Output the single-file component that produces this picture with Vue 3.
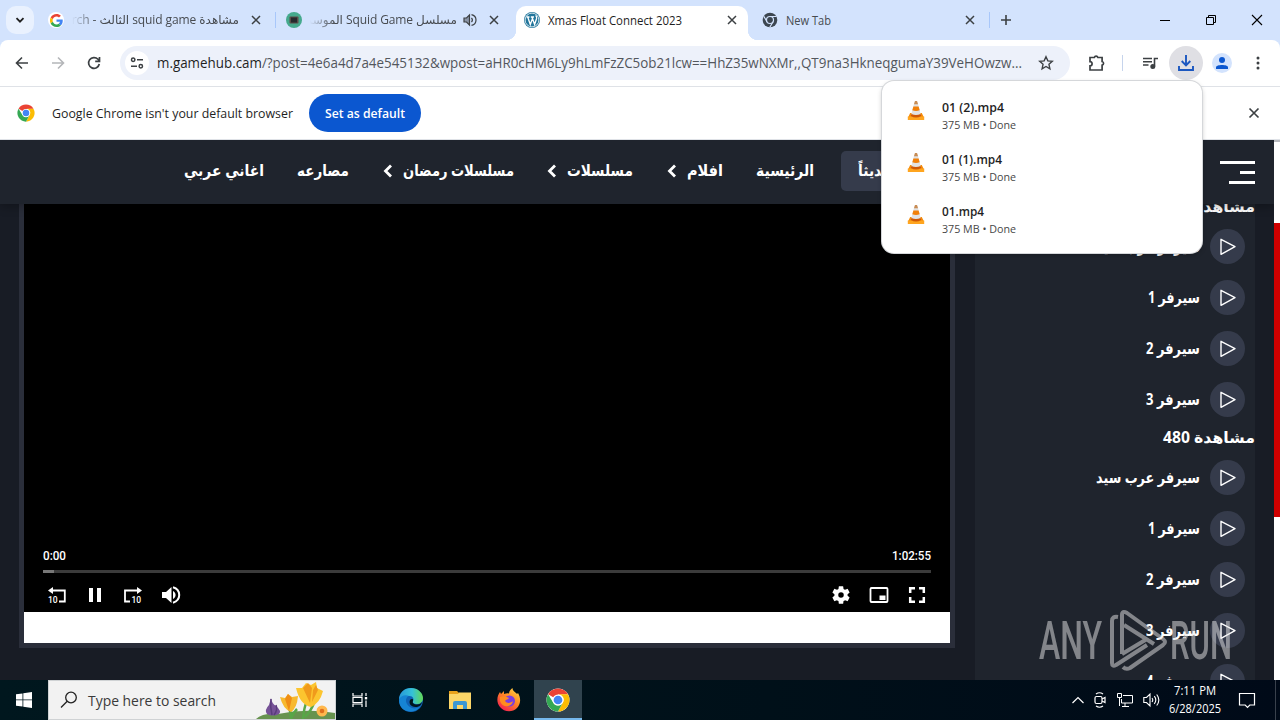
<script setup>
import { h } from 'vue';

// single line of text squeezed to a known width
const FitText = (props) => h('svg', { class: 'fit-text', width: props.w, height: 20 }, [
  h('text', {
    x: props.w / 2,
    y: 15,
    'text-anchor': 'middle',
    textLength: props.w,
    lengthAdjust: 'spacingAndGlyphs',
    fill: 'currentColor'
  }, props.text)
]);
FitText.props = ['w', 'text'];

const downloads = [
  { name: '01 (2).mp4', w: 62 },
  { name: '01 (1).mp4', w: 60 },
  { name: '01.mp4', w: 42 }
];

const menu = [
  { label: 'الرئيسية', w: 58 },
  { label: 'افلام', w: 36, arrow: true },
  { label: 'مسلسلات', w: 66, arrow: true },
  { label: 'مسلسلات رمضان', w: 111, arrow: true },
  { label: 'مصارعه', w: 52 },
  { label: 'اغاني عربي', w: 80 }
];

const groups = [
  {
    title: 'مشاهدة 720',
    servers: [
      { label: 'سيرفر عرب سيد', w: 104 },
      { label: 'سيرفر 1', w: 52 },
      { label: 'سيرفر 2', w: 54 },
      { label: 'سيرفر 3', w: 54 }
    ]
  },
  {
    title: 'مشاهدة 480',
    servers: [
      { label: 'سيرفر عرب سيد', w: 104 },
      { label: 'سيرفر 1', w: 52 },
      { label: 'سيرفر 2', w: 54 },
      { label: 'سيرفر 3', w: 54 },
      { label: 'سيرفر 4', w: 54 }
    ]
  }
];
</script>

<template>
  <div class="screen">
    <svg class="defs" width="0" height="0">
      <defs>
        <symbol id="chrome" viewBox="0 0 48 48">
          <circle cx="24" cy="24" r="23" fill="#fff" />
          <path d="M24 24 4.1 12.5A23 23 0 0 1 43.9 12.5L24 13Z" fill="#ea4335" />
          <path d="M43.9 12.5A23 23 0 0 1 24 47L33.5 29.5A11 11 0 0 0 24 12.5Z" fill="#fbbc04" />
          <path d="M4.1 12.5A23 23 0 0 0 24 47L33.5 29.5A11 11 0 0 1 14.5 29.5Z" fill="#34a853" />
          <circle cx="24" cy="24" r="11" fill="#fff" />
          <circle cx="24" cy="24" r="8.7" fill="#4285f4" />
        </symbol>
        <symbol id="close" viewBox="0 0 16 16">
          <path d="M4 4l8 8M12 4l-8 8" fill="none" stroke="currentColor" stroke-width="1.5" />
        </symbol>
        <symbol id="cone" viewBox="0 0 18 21">
          <path d="M3.2 13h11.6l2.400 5H.8z" fill="#f58a07" />
          <path d="M.8 16.500h16.400v3.500H.8z" fill="#ffa51f" />
          <path d="M7.600 1.500h2.800L14 15.500q-5 2.600-10 0z" fill="#e2e2e2" />
          <path d="M8 1h2l1 3.300H7z" fill="#c98d55" />
          <path d="M6.400 6.500h5.200l1.100 3.800q-3.700 1.500-7.400 0z" fill="#f28008" />
          <path d="M4.400 14l-.6 2q5.200 3 10.400 0l-.6-2q-4.600 2.200-9.200 0z" fill="#cf5805" />
        </symbol>
      </defs>
    </svg>

    <div class="tab-strip">
      <div class="tab-search">
        <svg width="12" height="12" viewBox="0 0 12 12"><path d="M2.5 4.2 6 7.7l3.5-3.5" fill="none" stroke="#1f1f1f" stroke-width="1.8" /></svg>
      </div>
      <div class="tab tab-google">
        <span class="round-icon">
          <svg width="13" height="13" viewBox="0 0 48 48">
            <path fill="#ea4335" d="M24 9.5c3.5 0 6.700 1.200 9.200 3.600l6.900-6.900C35.900 2.400 30.500 0 24 0 14.600 0 6.500 5.400 2.600 13.200l8 6.200C12.400 13.700 17.700 9.500 24 9.500z" />
            <path fill="#4285f4" d="M47 24.500c0-1.600-.2-3.100-.4-4.500H24v9h12.900c-.6 3-2.200 5.500-4.700 7.200l7.700 6C44.400 38 47 31.800 47 24.500z" />
            <path fill="#fbbc05" d="M10.500 28.600a14.500 14.500 0 0 1 0-9.200l-8-6.200a24 24 0 0 0 0 21.600z" />
            <path fill="#34a853" d="M24 48c6.500 0 11.900-2.100 15.900-5.800l-7.700-6c-2.200 1.500-4.900 2.300-8.200 2.300-6.300 0-11.600-4.200-13.500-9.900l-8 6.200C6.500 42.600 14.600 48 24 48z" />
          </svg>
        </span>
        <span class="tab-title faded" dir="rtl">مشاهدة squid game الثالث - Google Search</span>
        <svg class="tab-close" width="16" height="16"><use href="#close" /></svg>
      </div>
      <i class="tab-line"></i>
      <div class="tab tab-series">
        <svg width="16" height="16" viewBox="0 0 16 16">
          <circle cx="8" cy="8" r="8" fill="#45a98d" />
          <rect x="3.500" y="4.500" width="9" height="7" rx="1" fill="#5b4b48" />
          <rect x="5" y="5.500" width="6" height="5" fill="#252a2d" />
        </svg>
        <span class="tab-title faded" dir="rtl">مسلسل Squid Game الموسم الثالث</span>
        <svg class="speaker" width="14" height="14" viewBox="0 0 14 14" fill="none" stroke="#3c4043" stroke-width="1.2">
          <path d="M1 5v4h2.500L6.500 12V2L3.500 5z" fill="#8a94a6" />
          <path d="M8.500 4.800q1.800 2.200 0 4.400M8.500 1.600c6 1.400 6 9.400 0 10.800" />
        </svg>
        <svg class="tab-close" width="16" height="16"><use href="#close" /></svg>
      </div>
      <div class="tab tab-active">
        <svg width="16" height="16" viewBox="0 0 16 16">
          <circle cx="8" cy="8" r="8" fill="#21759b" />
          <circle cx="8" cy="8" r="6.900" fill="none" stroke="#fff" stroke-width=".8" />
          <path d="M2.500 5h3M6.800 5h3.200M3.700 5l2.600 7.500L8.500 6.500M8 5l2.600 7.500L12.600 6.500q.4-2-1-3" fill="none" stroke="#fff" stroke-width="1.300" />
        </svg>
        <FitText class="tab-title" :w="134" text="Xmas Float Connect 2023" />
        <svg class="tab-close" width="16" height="16"><use href="#close" /></svg>
      </div>
      <div class="tab tab-new">
        <svg width="16" height="16" viewBox="0 0 16 16">
          <circle cx="8" cy="8" r="7.300" fill="#3c4650" />
          <circle cx="8" cy="8" r="3.500" fill="#3c4650" stroke="#d3e3fd" stroke-width="1.200" />
          <path d="M8 4.500h6.500M5 9.800 1.800 4.200M11 9.800 7.800 15.300" stroke="#d3e3fd" stroke-width="1.200" />
        </svg>
        <FitText class="tab-title" :w="45" text="New Tab" />
        <svg class="tab-close" width="16" height="16"><use href="#close" /></svg>
      </div>
      <i class="tab-line"></i>
      <svg class="plus" width="12" height="12" viewBox="0 0 12 12"><path d="M6 1v10M1 6h10" stroke="#3c4043" stroke-width="1.600" /></svg>
      <div class="window-buttons">
        <svg width="12" height="12" viewBox="0 0 12 12"><path d="M1 6.500h10" stroke="#000" /></svg>
        <svg width="12" height="12" viewBox="0 0 12 12" fill="none" stroke="#000"><path d="M1.500 3.500h7v7h-7zM3.500 3V1.500h7v7H9" /></svg>
        <svg width="12" height="12" viewBox="0 0 12 12"><path d="M1 1l10 10M11 1 1 11" stroke="#000" stroke-width="1.100" /></svg>
      </div>
    </div>

    <div class="toolbar">
      <div class="nav-buttons">
        <svg width="16" height="16" viewBox="0 0 16 16" fill="none" stroke="#3c4043" stroke-width="1.600"><path d="M14 8H3M8 2.500 2.500 8 8 13.500" /></svg>
        <svg width="16" height="16" viewBox="0 0 16 16" fill="none" stroke="#b4b6b9" stroke-width="1.600"><path d="M2 8h11M8 2.500 13.500 8 8 13.500" /></svg>
        <svg width="16" height="16" viewBox="0 0 16 16" fill="none" stroke="#3c4043" stroke-width="1.700"><path d="M13.300 9A5.400 5.400 0 1 1 12 4.300L13.500 6M13.500 2v4.300H9.200" /></svg>
      </div>
      <div class="omnibox">
        <span class="site-info">
          <svg width="14" height="14" viewBox="0 0 14 14" fill="none" stroke="#3c4043" stroke-width="1.500"><circle cx="3.200" cy="3.800" r="1.700" /><path d="M7 3.800h6M1 10.200h6" /><circle cx="10.800" cy="10.200" r="1.700" /></svg>
        </span>
        <svg class="url" width="866" height="22">
          <text x="0" y="16" textLength="865" lengthAdjust="spacingAndGlyphs"><tspan class="host">m.gamehub.cam</tspan>/?post=4e6a4d7a4e545132&amp;wpost=aHR0cHM6Ly9hLmFzZC5ob21lcw==HhZ35wNXMr,,QT9na3HkneqgumaY39VeHOwzw...</text>
        </svg>
        <svg class="star" width="16" height="16" viewBox="0 0 16 16" fill="none" stroke="#3c4043" stroke-width="1.400"><path d="M8 1.800l1.850 4.100 4.450.45-3.350 3 .95 4.400L8 11.500l-3.900 2.250.95-4.400-3.350-3 4.450-.45z" /></svg>
      </div>
      <svg class="puzzle" width="20" height="20" viewBox="0 0 20 20" fill="none" stroke="#3c4043" stroke-width="1.700"><path d="M3 4.500h4.300a1.900 1.900 0 0 1 3.600 0h4.200v4a1.900 1.900 0 0 1 0 3.700v4.800H3v-4.200a2 2 0 0 0 0-4.200z" /></svg>
      <i class="tool-line"></i>
      <svg class="media" width="16" height="14" viewBox="0 0 16 14" fill="none" stroke="#3c4043" stroke-width="1.600"><path d="M1 2.500h9M1 5.800h9M1 9h5.500M12.500 10.500V2.500H16" /><circle cx="10.800" cy="10.600" r="1.700" fill="#3c4043" /></svg>
      <span class="download-button">
        <svg width="18" height="18" viewBox="0 0 18 18" fill="none" stroke="#1b57c0" stroke-width="1.900"><path d="M9 1v10M4.700 7 9 11.300 13.300 7M2 12v4h14v-4" /></svg>
      </span>
      <span class="avatar">
        <svg width="14" height="14" viewBox="0 0 14 14" fill="#0b57d0"><circle cx="7" cy="4" r="3" /><path d="M1 13v-1.500C1 8.300 13 8.300 13 11.500V13z" /></svg>
      </span>
      <svg class="dots" width="4" height="14" viewBox="0 0 4 14" fill="#3c4043"><circle cx="2" cy="2" r="1.500" /><circle cx="2" cy="7" r="1.500" /><circle cx="2" cy="12" r="1.500" /></svg>
    </div>

    <div class="info-bar">
      <svg width="18" height="18"><use href="#chrome" /></svg>
      <FitText class="info-text" :w="241" text="Google Chrome isn't your default browser" />
      <button class="default-button"><FitText :w="80" text="Set as default" /></button>
      <svg class="info-close" width="18" height="18"><use href="#close" /></svg>
    </div>

    <div class="page">
      <div class="page-body">
        <header class="site-header" dir="rtl">
          <div class="burger"><i></i><i></i><i></i></div>
          <div class="recent"><FitText :w="92" text="المضاف حديثاً" /></div>
          <div v-for="item in menu" :key="item.label" class="menu-item">
            <FitText :w="item.w" :text="item.label" />
            <svg v-if="item.arrow" width="10" height="14" viewBox="0 0 10 14"><path d="M8 1.500 2.500 7 8 12.500" fill="none" stroke="#fff" stroke-width="2.800" /></svg>
          </div>
        </header>

        <main class="content">
          <div class="player">
            <div class="video">
              <div class="times">
                <FitText :w="23" text="0:00" />
                <FitText :w="39" text="1:02:55" />
              </div>
              <div class="progress"><i></i></div>
              <div class="controls">
                <svg width="20" height="20" viewBox="0 0 20 20">
                  <path d="M5 5.500h12.800v11H12" fill="none" stroke="#fff" stroke-width="1.800" />
                  <path d="M1 5.500 6 2v7z" fill="#fff" />
                  <text x="1" y="17.800">10</text>
                </svg>
                <svg width="20" height="20" viewBox="0 0 20 20"><path d="M4 3h4v14H4zM12 3h4v14h-4z" fill="#fff" /></svg>
                <svg width="20" height="20" viewBox="0 0 20 20">
                  <path d="M15 5.500H2v11h5" fill="none" stroke="#fff" stroke-width="1.800" />
                  <path d="M19 5.500 14 2v7z" fill="#fff" />
                  <text x="8.500" y="17.800">10</text>
                </svg>
                <svg width="20" height="20" viewBox="0 0 20 20" fill="#fff">
                  <path d="M1 7v6h4l5.500 5V2L5 7z" />
                  <path d="M12 6v8c3.400-1.600 3.400-6.400 0-8z" />
                  <path d="M12 2.300c8.300 2.400 8.300 13 0 15.400" fill="none" stroke="#fff" stroke-width="2" />
                </svg>
                <i class="spacer"></i>
                <svg width="22" height="22" viewBox="0 0 24 24" fill="#fff"><path d="M19.140 12.940c.04-.3.060-.610.060-.940s-.02-.64-.070-.940l2.030-1.580a.49.49 0 0 0 .12-.61l-1.920-3.320a.49.49 0 0 0-.590-.220l-2.390.960c-.5-.380-1.030-.7-1.620-.940l-.360-2.540a.48.48 0 0 0-.480-.410h-3.840c-.24 0-.43.170-.47.410l-.36 2.540c-.59.240-1.130.570-1.620.940l-2.390-.96c-.22-.080-.47 0-.59.220L2.740 8.870c-.12.210-.08.470.12.610l2.030 1.580c-.05.3-.090.630-.090.940s.02.640.070.940l-2.030 1.580a.49.49 0 0 0-.12.610l1.920 3.320c.12.220.37.290.59.220l2.390-.96c.5.380 1.030.7 1.620.940l.36 2.540c.05.240.24.410.48.410h3.840c.24 0 .44-.17.47-.41l.36-2.540c.59-.24 1.130-.56 1.620-.94l2.390.960c.22.080.47 0 .59-.22l1.920-3.320c.12-.22.070-.47-.12-.61zM12 15a3 3 0 1 1 0-6 3 3 0 0 1 0 6z" /></svg>
                <svg width="20" height="20" viewBox="0 0 20 20"><rect x="1.500" y="3" width="17" height="14" rx="1" fill="none" stroke="#fff" stroke-width="1.800" /><path d="M10.500 10.500h6v4.500h-6z" fill="#fff" /></svg>
                <svg width="20" height="20" viewBox="0 0 20 20" fill="none" stroke="#fff" stroke-width="2.500"><path d="M3.200 8V3.200H8M12 3.200h4.800V8M16.800 12v4.800H12M8 16.800H3.200V12" /></svg>
              </div>
            </div>
            <div class="player-strip"></div>
          </div>

          <aside class="servers" dir="rtl">
            <section v-for="group in groups" :key="group.title">
              <h3><FitText :w="92" :text="group.title" /></h3>
              <div v-for="server in group.servers" :key="server.label" class="server">
                <span class="play">
                  <svg width="18" height="18" viewBox="0 0 18 18"><path d="M2 1.300v15L16 8.700z" fill="none" stroke="#fff" stroke-width="1.400" stroke-linejoin="round" /></svg>
                </span>
                <FitText :w="server.w" :text="server.label" />
              </div>
            </section>
          </aside>
        </main>
      </div>
      <div class="scrollbar"><i></i></div>
    </div>

    <footer class="taskbar">
      <div class="start">
        <svg width="16" height="16" viewBox="0 0 16 16" fill="#fff"><path d="M0 2.300 6.500 1.400v6.100H0zM7.300 1.300 16 0v7.500H7.300zM0 8.300h6.500v6.300L0 13.700zM7.300 8.300H16V16l-8.700-1.300z" /></svg>
      </div>
      <div class="search">
        <svg width="18" height="18" viewBox="0 0 18 18" fill="none" stroke="#222" stroke-width="1.300"><circle cx="11" cy="6.500" r="5.300" /><path d="M7.200 10.300 1 16.500" /></svg>
        <FitText :w="128" text="Type here to search" />
        <svg class="flowers" width="80" height="38" viewBox="0 0 80 38">
          <path d="M1 38q6-6 22-5 28-6 57-1v6z" fill="#67934f" />
          <path d="M36 38q0-8-3-13M48 38q1-12 4-18M36 38q2-6 6-10M50 36q6-6 9-14" fill="none" stroke="#58a648" stroke-width="2.500" />
          <path d="M16 17q1 6 5 8 6 5 3 8-6 3-12 0-3-4 2-9z" fill="#765297" />
          <path d="M16 18q-1 8 1 16M21 24q2 5-2 10" fill="none" stroke="#5a3c7c" stroke-width="1.500" />
          <path d="M25 16l5 1 3-4 4 3 6-1q-1 12-7 16-8-3-11-15z" fill="#f7b92e" />
          <path d="M30 18l3-5 4 4-3 13z" fill="#ef8d16" />
          <path d="M41 7l6 0 4-5 5 2 5-3 1 6 6 3q-3 12-12 16-11-2-15-19z" fill="#fcc52f" />
          <path d="M48 7l5-5 4 5-2 15zM58 9l3-5 2 5-6 12z" fill="#f09a1b" />
          <circle cx="67" cy="30" r="5.500" fill="#ffb84d" />
          <circle cx="67" cy="30" r="2.300" fill="#e0701c" />
        </svg>
      </div>
      <div class="app">
        <svg width="18" height="18" viewBox="0 0 18 18" fill="none" stroke="#fff" stroke-width="1.200"><path d="M2 2v3h9V2M2 16v-3h9v3M2 6.500h9v5H2zM15 2v3M15 9.500V16" /><path d="M13.800 7.200h2.400" stroke-width="2.400" /></svg>
      </div>
      <div class="app">
        <svg width="24" height="24" viewBox="0 0 24 24">
          <defs>
            <linearGradient id="edge-top" x1="0" y1="0" x2="1" y2="0"><stop offset="0" stop-color="#2797d8" /><stop offset=".55" stop-color="#35c1d9" /><stop offset="1" stop-color="#63d955" /></linearGradient>
          </defs>
          <circle cx="12" cy="12" r="12" fill="#0f62b5" />
          <path d="M0 12C0 4.500 5.500 0 12 0c7 0 12 5 12 10 0 4-3 6-6 6-3 0-5-1-4-3 1-1.500.5-5-3.500-5C5 8 1 9 0 12z" fill="url(#edge-top)" />
          <path d="M0 12C2 7 7 6.500 10 8c-4 1-5 9 3 12 3 1 6 0 8.500-2C16 27 0 25 0 12z" fill="#1684d4" />
          <path d="M14 13c-1 2 1 3.500 4 3.500 2 0 4-.8 5-2.500-.4 3-3 5-6.500 5-5 0-7-4-5.500-7 1-1.500 4-1.500 3 1z" fill="#00171e" />
        </svg>
      </div>
      <div class="app">
        <svg width="22" height="20" viewBox="0 0 22 20">
          <path d="M0 1h8l2 2h11v5H0z" fill="#e9a21b" />
          <path d="M0 4h9l1-1.500h12V19H0z" fill="#fcd668" />
          <path d="M4 19v-6q0-2 2-2h10q2 0 2 2v6h-4v-4H8v4z" fill="#3b97d3" />
        </svg>
      </div>
      <div class="app">
        <svg width="24" height="24" viewBox="0 0 24 24">
          <defs>
            <linearGradient id="fox" x1="1" y1="0" x2=".3" y2="1"><stop offset="0" stop-color="#ffe14a" /><stop offset=".5" stop-color="#ff8a24" /><stop offset="1" stop-color="#f5214f" /></linearGradient>
          </defs>
          <path d="M3 4l1 2 3-3v3q3-1 5-.5C12 3 14 1 15.500 0c0 3 3 4 4.500 6l1-1c3 5 3 11-1 15-5 5-13 4-17-1C-1 14 0 8 3 4z" fill="url(#fox)" />
          <circle cx="12.500" cy="13" r="5.500" fill="#7a3ee0" />
          <path d="M3 9c4-2 7 0 9 1-1 2-3 1-4 3 2 3 6 2 8 0-1 7-11 7-13 0z" fill="#ff8c1f" />
        </svg>
      </div>
      <div class="app app-open">
        <svg width="24" height="24"><use href="#chrome" /></svg>
      </div>
      <div class="tray">
        <svg width="12" height="12" viewBox="0 0 12 12" fill="none" stroke="#fff" stroke-width="1.200"><path d="M.5 9 6 3.500 11.500 9" /></svg>
        <svg width="12" height="16" viewBox="0 0 12 16" fill="none" stroke="#fff" stroke-width="1.200"><rect x="1" y="4.500" width="7" height="7" rx="1.500" /><path d="M8 7l3-1.500v5L8 9M2 2q3.500-2.500 7 0M2 14q3.500 2.500 7 0" /></svg>
        <svg width="16" height="16" viewBox="0 0 16 16" fill="none" stroke="#fff"><path d="M6 3.500h9.500v7.500H4.500V7M8 11v3M5 14.500h7M.5 1.500h4v4h-4zM2.500 5.500V14" /></svg>
        <svg width="17" height="16" viewBox="0 0 17 16" fill="none" stroke="#fff" stroke-width="1.100"><path d="M.8 5.500v5h2.700L7 14V2L3.500 5.500zM9 6q1.500 2 0 4M11.300 4.200q3 3.800 0 7.600M13.700 2.500q4.300 5.500 0 11" /></svg>
      </div>
      <div class="clock">
        <FitText :w="42" text="7:11 PM" />
        <FitText :w="52" text="6/28/2025" />
      </div>
      <svg class="notice" width="18" height="18" viewBox="0 0 18 18"><path d="M1.500 2.500h15v11.500h-4.700L9.500 16.300 7.200 14H1.500z" fill="none" stroke="#fff" stroke-width="1.200" /></svg>
      <i class="show-desktop"></i>
    </footer>

    <div class="downloads">
      <div v-for="file in downloads" :key="file.name" class="download">
        <svg width="18" height="21"><use href="#cone" /></svg>
        <div class="file">
          <FitText class="file-name" :w="file.w" :text="file.name" />
          <FitText class="file-size" :w="74" text="375 MB • Done" />
        </div>
      </div>
    </div>

    <svg class="watermark" width="194" height="64" viewBox="0 0 194 64">
      <text x="1" y="50" textLength="63" lengthAdjust="spacingAndGlyphs">ANY</text>
      <text x="132" y="50" textLength="62" lengthAdjust="spacingAndGlyphs">RUN</text>
      <path d="M80 8q-6-1-6 4v42q0 4 4 2l31-20M84 45V6q0-5 5-2l36 26q4 3 0 6L92 59q-4 2-7-1M86 16l30 19M84 45l25-15" />
    </svg>
  </div>
</template>

<style>
body {
  margin: 0;
  overflow: hidden;
}
</style>

<style scoped>
.screen {
  position: relative;
  width: 1280px;
  height: 720px;
  overflow: hidden;
  background: #fff;
  font-family: "Open Sans", "Noto Sans", "DejaVu Sans", sans-serif;
  font-size: 12px;
  color: #1f1f1f;
}

.screen svg {
  flex: none;
  display: block;
}

.defs {
  position: absolute;
}

.fit-text {
  overflow: visible;
}

.tab-strip {
  display: flex;
  align-items: center;
  height: 40px;
  box-sizing: border-box;
  padding-left: 6px;
  background: #d3e3fd;
}

.tab-search {
  display: flex;
  align-items: center;
  justify-content: center;
  width: 28px;
  height: 28px;
  border-radius: 10px;
  background: #e9f1fe;
}

.tab {
  display: flex;
  align-items: center;
  gap: 8px;
  color: #474b50;
}

.tab-google {
  width: 216px;
  margin-left: 14px;
}

.round-icon {
  display: flex;
  flex: none;
  align-items: center;
  justify-content: center;
  width: 16px;
  height: 16px;
  border-radius: 50%;
  background: #fff;
}

.tab-title.faded {
  width: 167px;
  line-height: 20px;
  overflow: hidden;
  white-space: nowrap;
  font-size: 12px;
  letter-spacing: -0.1px;
  font-family: "Open Sans", "DejaVu Sans", sans-serif;
  mask-image: linear-gradient(to right, transparent, #000 24px);
}

.tab-close {
  margin-left: auto;
  color: #3c4043;
}

.tab-line {
  width: 1px;
  height: 16px;
  margin-left: 11px;
  background: #a8c7fa;
}

.tab-series {
  width: 216px;
  margin-left: 10px;
}

.tab-series .faded {
  width: 147px;
}

.tab-series .speaker {
  margin-left: -2px;
}

.tab-active {
  position: relative;
  z-index: 1;
  align-self: flex-end;
  width: 216px;
  height: 28px;
  padding: 0 8px 6px;
  margin-left: 14px;
  border-radius: 10px 10px 0 0;
  background: #fff;
  color: #1f1f1f;
}

.tab-active::before,
.tab-active::after {
  content: '';
  position: absolute;
  bottom: 0;
  width: 10px;
  height: 10px;
}

.tab-active::before {
  left: -10px;
  background: radial-gradient(circle at 0 0, transparent 10px, #fff 10.5px);
}

.tab-active::after {
  right: -10px;
  background: radial-gradient(circle at 100% 0, transparent 10px, #fff 10.5px);
}

.tab-new {
  width: 216px;
  margin-left: 14px;
}

.plus {
  margin-left: 10px;
}

.window-buttons {
  display: flex;
  gap: 34px;
  margin-left: auto;
  padding-right: 17px;
}

.toolbar {
  position: relative;
  display: flex;
  align-items: center;
  height: 47px;
  box-sizing: border-box;
  border-bottom: 1px solid #dfe2e7;
  border-radius: 8px 8px 0 0;
  background: #fff;
}

.screen::before {
  content: '';
  position: absolute;
  top: 40px;
  width: 100%;
  height: 8px;
  background: #d3e3fd;
}

.nav-buttons {
  display: flex;
  gap: 20px;
  margin-left: 14px;
}

.omnibox {
  display: flex;
  align-items: center;
  width: 950px;
  height: 34px;
  margin-left: 18px;
  border-radius: 17px;
  background: #edf1fa;
}

.site-info {
  display: flex;
  align-items: center;
  justify-content: center;
  width: 24px;
  height: 24px;
  margin: 0 8px 0 5px;
  border-radius: 50%;
  background: #fff;
}

.url {
  font-size: 14px;
  fill: #53575d;
}

.host {
  fill: #1f1f1f;
}

.star {
  margin-left: 15px;
}

.puzzle {
  margin-left: 17px;
}

.tool-line {
  width: 1px;
  height: 16px;
  margin: 0 19px 0 15px;
  background: #c6d4ec;
}

.download-button {
  display: flex;
  align-items: center;
  justify-content: center;
  width: 34px;
  height: 34px;
  margin-left: 11px;
  border-radius: 50%;
  background: #dfdfe4;
}

.avatar {
  display: flex;
  align-items: center;
  justify-content: center;
  width: 20px;
  height: 20px;
  margin: 0 24px 0 9px;
  border-radius: 50%;
  background: #d3e3fd;
}

.info-bar {
  display: flex;
  align-items: center;
  height: 53px;
  box-sizing: border-box;
  padding: 0 17px;
  border-bottom: 1px solid #dfe2e7;
  background: #fff;
}

.info-text {
  margin: 0 16px 0 17px;
  font-size: 13px;
}

.default-button {
  display: flex;
  align-items: center;
  justify-content: center;
  width: 112px;
  height: 38px;
  padding: 0;
  border: 0;
  border-radius: 19px;
  background: #0b57d0;
  color: #fff;
  font: 600 13px "Open Sans", sans-serif;
}

.info-close {
  margin-left: auto;
  color: #3c4043;
}

.page {
  display: flex;
  height: 540px;
  overflow: hidden;
}

.page-body {
  width: 1274px;
  overflow: hidden;
  background: #181c25;
  font-family: "Open Sans", "DejaVu Sans", sans-serif;
  font-weight: bold;
  color: #fff;
}

.site-header {
  position: relative;
  z-index: 1;
  display: flex;
  align-items: center;
  height: 64px;
  box-sizing: border-box;
  padding: 0 19px 2px;
  background: #1f242d;
  font-size: 15.5px;
  box-shadow: 0 2px 10px rgba(0, 0, 0, 0.3);
}

.burger {
  display: flex;
  flex-direction: column;
  gap: 7px;
  width: 35px;
  margin: 3px 0 0 253px;
}

.burger i {
  width: 35px;
  height: 3px;
  background: #fff;
}

.burger i:nth-child(2) {
  width: 15px;
}

.burger i:nth-child(3) {
  width: 26px;
}

.recent {
  display: flex;
  align-items: center;
  width: 92px;
  height: 40px;
  padding: 0 17px;
  margin-left: 27px;
  border-radius: 5px;
  background: #353b4b;
}

.menu-item {
  display: flex;
  align-items: center;
  gap: 10px;
  margin-left: 33.4px;
}

.content {
  display: flex;
  align-items: flex-start;
  gap: 20px;
  margin-top: -10px;
  padding-left: 19px;
}

.player {
  width: 926px;
  padding: 0 5px 5px;
  background: #2a2e3a;
}

.video {
  display: flex;
  flex-direction: column;
  justify-content: flex-end;
  height: 418px;
  box-sizing: border-box;
  padding: 0 19px 7px;
  background: #000;
}

.times {
  display: flex;
  justify-content: space-between;
  font-family: Roboto, sans-serif;
  font-size: 12px;
  font-weight: 500;
}

.progress {
  height: 3px;
  margin: 5px 0 12px;
  background: #3b3b3b;
}

.progress i {
  display: block;
  width: 11px;
  height: 3px;
  background: #777;
}

.controls {
  display: flex;
  align-items: center;
  gap: 18px;
  height: 20px;
  padding: 0 4px;
  font: 500 8.5px Roboto, sans-serif;
  fill: #fff;
}

.spacer {
  margin-left: auto;
}

.controls .spacer + svg {
  margin-right: -1px;
}

.player-strip {
  height: 31px;
  background: #fff;
}

.servers {
  width: 280px;
  height: 520px;
  background: #1f242d;
  font-size: 15.5px;
}

.servers h3 {
  display: flex;
  align-items: center;
  height: 27px;
  box-sizing: border-box;
  margin: 0;
  padding-bottom: 2px;
  font-size: 15.5px;
}

.server {
  display: flex;
  align-items: center;
  gap: 10px;
  height: 51px;
  padding: 0 10px;
}

.play {
  display: flex;
  align-items: center;
  justify-content: center;
  width: 35px;
  height: 35px;
  border-radius: 50%;
  background: #353b4b;
}

.scrollbar {
  width: 6px;
  box-sizing: border-box;
  border-top: 2px solid #b9bbc0;
  background: #fff;
}

.scrollbar i {
  display: block;
  height: 294px;
  margin-top: 81px;
  background: #cf0000;
}

.taskbar {
  display: flex;
  height: 40px;
  background: linear-gradient(to right, #00171e, #001019 60%, #000a18);
  color: #fff;
}

.start {
  display: flex;
  align-items: center;
  justify-content: center;
  width: 48px;
}

.search {
  display: flex;
  align-items: center;
  width: 288px;
  box-sizing: border-box;
  padding-left: 11px;
  border: 1px solid #cfd2d4;
  background: #f2f2f2;
  color: #3a3a3a;
  font-size: 15px;
}

.search .fit-text {
  margin: 2px 0 0 10px;
}

.flowers {
  margin-left: auto;
}

.app {
  display: flex;
  align-items: center;
  justify-content: center;
  width: 49px;
}

.app:nth-child(3) {
  width: 48px;
}

.app:nth-child(4) {
  width: 53px;
}

.app:nth-child(5) {
  width: 46px;
}

.app:nth-child(6) {
  width: 51px;
}

.app-open {
  width: 48px;
  box-sizing: border-box;
  padding-top: 2px;
  border-bottom: 2px solid #76b9ed;
  background: #30434e;
}

.tray {
  display: flex;
  align-items: center;
  gap: 10.5px;
  margin-left: auto;
}

.clock {
  display: flex;
  flex-direction: column;
  align-items: center;
  width: 52px;
  margin: 0 17px 0 9px;
}

.clock .fit-text + .fit-text {
  margin-top: -2px;
}

.notice {
  align-self: center;
  margin-right: 19px;
}

.show-desktop {
  width: 4px;
  border-left: 1px solid #39414c;
}

.downloads {
  position: absolute;
  z-index: 2;
  top: 81px;
  left: 882px;
  width: 320px;
  height: 172px;
  padding-top: 8px;
  box-sizing: border-box;
  border-radius: 12px;
  background: #fff;
  box-shadow: 0 0 0 1px #d5d7da, 0 2px 5px rgba(0, 0, 0, 0.25);
}

.download {
  display: flex;
  gap: 17px;
  height: 52px;
  padding-left: 25px;
}

.download > svg {
  margin-top: 11px;
}

.file {
  padding-top: 8px;
}

.file-name {
  font-size: 12.5px;
  font-weight: 600;
}

.file-size {
  margin-top: -3px;
  font-size: 11px;
  color: #474747;
}

.watermark {
  position: absolute;
  z-index: 3;
  top: 609px;
  left: 1038px;
  opacity: 0.5;
  font: 500 53px Roboto, sans-serif;
  fill: #e6e6e6;
}

.watermark path {
  fill: none;
  stroke: #e6e6e6;
  stroke-width: 4;
  stroke-linejoin: round;
}
</style>
